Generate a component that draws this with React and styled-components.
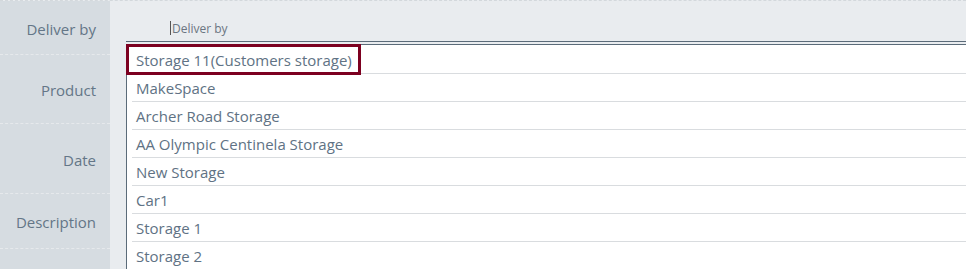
import React from "react";
import styled, { createGlobalStyle } from "styled-components";

const Global = createGlobalStyle`
  html, body { margin: 0; padding: 0; background: #e9ecef; }
  body { font-family: "Open Sans", "Noto Sans", sans-serif; overflow: hidden; }
  * { box-sizing: border-box; }
`;

const Page = styled.div`
  display: grid;
  grid-template-columns: 110px 1fr;
  width: 966px;
  height: 269px;
  border-top: 1px dashed #d3d8dc;
  overflow: hidden;
`;

const Labels = styled.div`
  background: #d6dce1;
  display: flex;
  flex-direction: column;
`;

const Label = styled.div`
  height: ${(p) => p.h}px;
  display: flex;
  align-items: center;
  justify-content: flex-end;
  padding-right: 14px;
  padding-top: 2px;
  font-size: 15px;
  color: #647687;
  border-bottom: 1px dashed #e6e9ec;
  flex: none;
`;

const Field = styled.div`
  padding-left: 16px;
`;

const Input = styled.div`
  height: 41px;
  padding-left: 44px;
  padding-top: 19px;
  border-bottom: 1px solid #5b6b79;
  font-size: 12px;
  color: #6b7581;
  display: flex;
  align-items: flex-start;
`;

const Caret = styled.span`
  display: inline-block;
  width: 1px;
  height: 14px;
  background: #555;
  margin-top: 1px;
  margin-right: 1px;
`;

const Dropdown = styled.ul`
  list-style: none;
  margin: 2px 0 0 0;
  padding: 1px 0 0 0;
  background: #fff;
  border-top: 1px solid #5b6b79;
  border-left: 1px solid #5b6b79;
  height: 400px;
`;

const Item = styled.li`
  height: 28px;
  display: flex;
  align-items: center;
  padding-left: 4px;
  margin-left: 5px;
  font-size: 15px;
  color: #607284;
  border-bottom: 1px solid #d9dcdf;
  white-space: nowrap;
  position: relative;
`;

const Highlight = styled.span`
  position: absolute;
  left: -6px;
  top: -2px;
  width: 235px;
  height: 31px;
  border: 3px solid #7c0020;
`;

const items = [
  "Storage 11(Customers storage)",
  "MakeSpace",
  "Archer Road Storage",
  "AA Olympic Centinela Storage",
  "New Storage",
  "Car1",
  "Storage 1",
  "Storage 2",
];

export default function App() {
  return (
    <>
      <Global />
      <Page>
        <Labels>
          <Label h={54}>Deliver by</Label>
          <Label h={69}>Product</Label>
          <Label h={70}>Date</Label>
          <Label h={55}>Description</Label>
        </Labels>
        <Field>
          <Input>
            <Caret />
            Deliver by
          </Input>
          <Dropdown>
            {items.map((t, i) => (
              <Item key={t}>
                {i === 0 && <Highlight />}
                {t}
              </Item>
            ))}
          </Dropdown>
        </Field>
      </Page>
    </>
  );
}
